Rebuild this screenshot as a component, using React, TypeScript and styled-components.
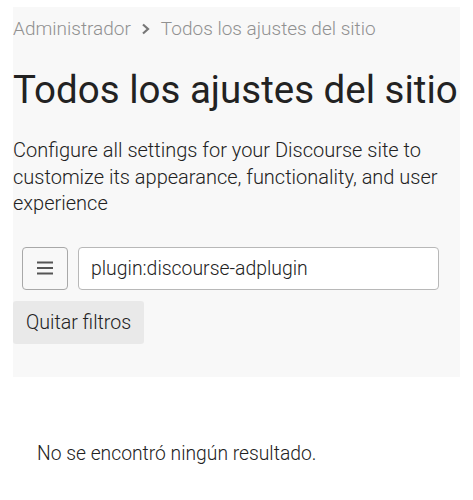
import React from "react";
import styled, { createGlobalStyle } from "styled-components";

const Global = createGlobalStyle`
  html, body { margin: 0; padding: 0; background: #ffffff; }
  body { font-family: Roboto, "Noto Sans", "Liberation Sans", sans-serif; color: #222222; }
  * { box-sizing: border-box; }
`;

const Page = styled.div`
  padding: 7px 13px 0 13px;
  width: 473px;
`;

const Panel = styled.section`
  background: #f8f8f8;
  width: 447px;
  padding: 0 0 33px 0;
`;

const Breadcrumb = styled.nav`
  display: flex;
  align-items: center;
  gap: 9px;
  padding-top: 9px;
  font-size: 19px;
  line-height: 26px;
  color: #919191;
  font-weight: 300;
`;

const Title = styled.h1`
  margin: 26px 0 0 0;
  font-size: 38.5px;
  line-height: 44px;
  font-weight: 400;
  color: #222222;
  white-space: nowrap;
`;

const Description = styled.p`
  margin: 25px 0 0 0;
  font-size: 20px;
  line-height: 26.5px;
  font-weight: 300;
  color: #222222;
`;

const FilterRow = styled.div`
  display: flex;
  gap: 10px;
  margin: 30px 21px 0 9px;
`;

const ToggleButton = styled.button`
  width: 46px;
  height: 43px;
  border: 1px solid #a8a8a8;
  border-radius: 4px;
  background: #f8f8f8;
  display: flex;
  align-items: center;
  justify-content: center;
  padding: 0;
`;

const SearchInput = styled.input`
  flex: 1;
  height: 43px;
  border: 1px solid #b8b8b8;
  border-radius: 4px;
  background: #ffffff;
  font-family: inherit;
  font-size: 19.4px;
  font-weight: 300;
  color: #222222;
  padding: 0 12px;
`;

const ClearButton = styled.button`
  margin-top: 11px;
  height: 43px;
  padding: 0 13px;
  border: none;
  border-radius: 3px;
  background: #e9e9e9;
  font-family: inherit;
  font-size: 19.6px;
  font-weight: 300;
  color: #222222;
`;

const Empty = styled.p`
  margin: 64px 0 0 24px;
  font-size: 19.3px;
  line-height: 26px;
  font-weight: 300;
  color: #222222;
`;

export default function App() {
  return (
    <>
      <Global />
      <Page>
        <Panel>
          <Breadcrumb>
            <span>Administrador</span>
            <svg width="12" height="14" viewBox="0 0 12 14">
              <path d="M3 2.5 L8 7 L3 11.5" fill="none" stroke="#777" strokeWidth="2.2" />
            </svg>
            <span>Todos los ajustes del sitio</span>
          </Breadcrumb>
          <Title>Todos los ajustes del sitio</Title>
          <Description>
            Configure all settings for your Discourse site to customize its appearance, functionality, and user
            experience
          </Description>
          <FilterRow>
            <ToggleButton aria-label="filtros">
              <svg width="16" height="14" viewBox="0 0 16 14">
                <rect x="0" y="0.5" width="16" height="2" fill="#555" />
                <rect x="0" y="6" width="16" height="2" fill="#555" />
                <rect x="0" y="11.5" width="16" height="2" fill="#555" />
              </svg>
            </ToggleButton>
            <SearchInput defaultValue="plugin:discourse-adplugin" />
          </FilterRow>
          <ClearButton>Quitar filtros</ClearButton>
        </Panel>
        <Empty>No se encontró ningún resultado.</Empty>
      </Page>
    </>
  );
}
